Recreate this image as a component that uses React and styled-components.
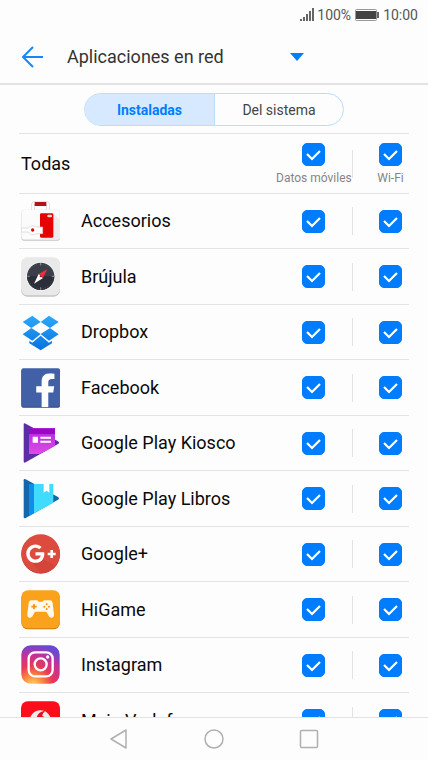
import { useState } from "react";
import styled, { createGlobalStyle } from "styled-components";
import { FaFacebookF, FaGooglePlusG } from "react-icons/fa";

const GlobalStyle = createGlobalStyle`
  * {
    box-sizing: border-box;
  }

  body {
    margin: 0;
    background: #fdfdfd;
    color: #0a0a0a;
    font-family: Roboto, "Noto Sans", sans-serif;
  }

  button, input, select {
    font-family: inherit;
  }
`;

const Screen = styled.div`
  display: flex;
  flex-direction: column;
  height: 100vh;
`;

const StatusBar = styled.div`
  display: flex;
  align-items: center;
  justify-content: flex-end;
  gap: 3px;
  height: 30px;
  padding-right: 10px;
  color: #555;
  font-size: 14px;
  line-height: 16px;
`;

const Header = styled.header`
  display: flex;
  align-items: center;
  gap: 22px;
  height: 55px;
  padding-left: 21px;
  border-bottom: 2px solid #e3e3e3;
`;

const IconButton = styled.button`
  display: grid;
  padding: 0;
  border: 0;
  background: none;
  cursor: pointer;
`;

const Picker = styled.div`
  display: flex;
  align-items: center;

  svg {
    margin-left: -14px;
    pointer-events: none;
  }
`;

const Select = styled.select`
  width: 237px;
  padding: 0;
  border: 0;
  background: none;
  color: #333;
  font-size: 18px;
  line-height: 24px;
  appearance: none;
`;

const Tabs = styled.div`
  display: grid;
  grid-template-columns: 1fr 1fr;
  align-self: center;
  width: 260px;
  height: 33px;
  margin: 8px 0 7px;
  border: 1px solid #bcdcf8;
  border-radius: 17px;
  overflow: hidden;
`;

const Tab = styled.button`
  border: 0;
  padding: 0;
  background: ${({ $active }) => ($active ? "#d7e9fe" : "none")};
  color: ${({ $active }) => ($active ? "#007dff" : "#444")};
  font-size: 14px;
  font-weight: ${({ $active }) => ($active ? 700 : 400)};
  cursor: pointer;

  & + & {
    border-left: 1px solid #bcdcf8;
  }
`;

const List = styled.ul`
  flex: 1;
  min-height: 0;
  margin: 0 19px;
  padding: 0;
  border-top: 1px solid #e3e3e3;
  list-style: none;
  overflow: hidden;
`;

const Row = styled.li`
  display: grid;
  grid-template-columns: 1fr 75px 2px 56px;
  align-items: center;
  height: 55px;
  border-bottom: 1px solid #e3e3e3;

  &:nth-child(odd) {
    height: 56px;
  }

  &:first-child {
    height: 60px;
  }
`;

const AppName = styled.div`
  display: flex;
  align-items: center;
  gap: 20px;
  padding-left: 2px;
  font-size: 18px;
  line-height: 24px;
  white-space: nowrap;
`;

const Separator = styled.span`
  justify-self: end;
  width: 1px;
  height: 28px;
  background: #e3e3e3;
`;

const Cell = styled.label`
  display: grid;
  justify-items: center;
  gap: 5px;
  padding-left: ${({ $last }) => ($last ? 19 : 0)}px;
  color: #858585;
  font-size: 12px;
  line-height: 14px;
  white-space: nowrap;
`;

const Box = styled.span`
  display: grid;

  > * {
    grid-area: 1 / 1;
  }

  svg {
    pointer-events: none;
  }
`;

const Checkbox = styled.input`
  width: 23px;
  height: 23px;
  margin: 0;
  border: 1px solid #b5b5b5;
  border-radius: 5px;
  appearance: none;
  cursor: pointer;

  &:checked {
    border-color: #007dff;
    background: #007dff;
  }
`;

const NavBar = styled.nav`
  display: flex;
  align-items: center;
  justify-content: center;
  gap: 71px;
  height: 43px;
  border-top: 1px solid #e3e3e3;
`;

const AppIcon = ({ children }) => (
  <svg width="40" height="40" viewBox="3 0 120 120" aria-hidden="true">
    {children}
  </svg>
);

const AccessoriesIcon = () => (
  <AppIcon>
    <path d="M39 30V12q0-7 7-7h31q7 0 7 7v18" fill="none" stroke="#cfcfcf" strokeWidth="10" />
    <path d="M39 28V12q0-7 7-7h31q7 0 7 7v16" fill="none" stroke="#fff" strokeWidth="7" />
    <rect x="44" y="3" width="35" height="12" fill="#b3121a" />
    <rect x="4" y="30" width="116" height="89" rx="8" fill="#c4c4c4" />
    <rect x="4" y="26" width="116" height="90" rx="8" fill="#e8e8e8" />
    <rect x="5" y="27" width="114" height="88" rx="8" fill="#fbfbfb" />
    <path d="M100 37l19 19v51q0 8-8 8H66l-6-6z" fill="#ededed" />
    <rect x="60" y="37" width="40" height="73" rx="4" fill="#e60000" />
    <rect x="82" y="41" width="14" height="8" rx="3" fill="#fbd0d0" />
    <path
      d="M4 81h22c4-8 18-8 22-3h20v20H48c-6 6-18 4-22-5H4z"
      fill="#fff"
      stroke="#cfcfcf"
      strokeWidth="2"
    />
    <circle cx="38" cy="87" r="5" fill="#e60000" />
  </AppIcon>
);

const CompassIcon = () => (
  <AppIcon>
    <rect x="3" y="4" width="117" height="115" rx="20" fill="#c4c4c4" />
    <rect x="3" y="1" width="117" height="114" rx="20" fill="#e9e9e9" />
    <circle cx="62" cy="58" r="43" fill="#fafafa" />
    <circle cx="62" cy="58" r="41" fill="#3a3e48" />
    <path d="M21 58a41 41 0 0 0 82 0z" fill="#2b2e38" />
    <circle cx="62" cy="58" r="37" fill="none" stroke="#7b7e87" strokeWidth="3" strokeDasharray="1 6" />
    <path d="M62 18v7M62 91v7M22 58h7M95 58h7" stroke="#c5c5c5" strokeWidth="2" />
    <path d="M82 37L56 51l12 13z" fill="#e8333f" />
    <path d="M42 80l14-29 12 13z" fill="#fff" />
    <circle cx="62" cy="58" r="3" fill="#8b1f29" />
  </AppIcon>
);

const DropboxIcon = () => (
  <AppIcon>
    <defs>
      <linearGradient id="dropbox" x1="0" y1="12" x2="0" y2="114" gradientUnits="userSpaceOnUse">
        <stop offset="0" stopColor="#2aa9fb" />
        <stop offset="1" stopColor="#0a72de" />
      </linearGradient>
    </defs>
    <g fill="url(#dropbox)">
      <path d="M37 11L8 30l26 18 28-18z" />
      <path d="M87 11l29 19-26 18-28-18z" />
      <path d="M34 48L8 67l29 19 25-20z" />
      <path d="M90 48l26 19-29 19-25-20z" />
      <path d="M62 71L37 92l-9-6v8l34 21 34-21v-8l-9 6z" />
    </g>
  </AppIcon>
);

const FacebookIcon = () => (
  <AppIcon>
    <rect x="4" y="4" width="116" height="115" rx="6" fill="#2e4577" />
    <rect x="4" y="1" width="116" height="115" rx="6" fill="#4260a5" />
    <FaFacebookF x="25" y="16" size="102" color="#fff" />
  </AppIcon>
);

const KioskIcon = () => (
  <AppIcon>
    <defs>
      <linearGradient id="kiosk" x1="0" y1="0" x2="0" y2="1">
        <stop offset="0" stopColor="#b22adf" />
        <stop offset="1" stopColor="#e048e8" />
      </linearGradient>
    </defs>
    <path d="M11 5q0-6 6-3l97 53q6 4 0 8l-97 55q-6 3-6-3z" fill="#5e2ca5" />
    <path d="M27 16h78v52L60 93H27z" fill="url(#kiosk)" />
    <path d="M27 16h78v17H27z" fill="#9c06c9" />
    <path d="M38 41h16v18H38zM61 41h32v6H61zM61 53h32v6H61z" fill="#fff" />
  </AppIcon>
);

const BooksIcon = () => (
  <AppIcon>
    <path d="M11 4q0-6 6-3l97 53q6 4 0 8l-97 55q-6 3-6-3z" fill="#1467a8" />
    <path d="M27 15h15v88l-15 8z" fill="#0f8deb" />
    <path d="M42 15h58v56l-58 32z" fill="#3fdcff" />
    <path d="M71 15h17v26l-8-6-9 6z" fill="#fff" />
  </AppIcon>
);

const GooglePlusIcon = () => (
  <AppIcon>
    <circle cx="62" cy="61" r="58" fill="#b83a2e" />
    <circle cx="62" cy="59" r="58" fill="#dd4b3e" />
    <path d="M60 70l46 26a58 58 0 0 1-44 21L31 80z" fill="#d24538" />
    <FaGooglePlusG x="17" y="13" size="92" color="#fff" />
  </AppIcon>
);

const GameIcon = () => (
  <AppIcon>
    <rect x="4" y="4" width="116" height="114" rx="20" fill="#d17c0c" />
    <rect x="4" y="1" width="116" height="114" rx="20" fill="#faa21b" />
    <path
      d="M34 31h16q4 0 6 4h12q2-4 6-4h16q7 0 8 9l4 32c1 14-11 14-16 5l-7-12H45l-7 12c-5 9-17 9-16-5l4-32q1-9 8-9z"
      fill="#fff8ec"
    />
    <path d="M42 42v16M34 50h16" stroke="#ef9414" strokeWidth="5" />
    <g fill="#ef9414">
      <circle cx="80" cy="43" r="3" />
      <circle cx="80" cy="57" r="3" />
      <circle cx="73" cy="50" r="3" />
      <circle cx="87" cy="50" r="3" />
    </g>
  </AppIcon>
);

const InstagramIcon = () => (
  <AppIcon>
    <defs>
      <radialGradient id="insta" cx="0.3" cy="1.05" r="1.05">
        <stop offset="0" stopColor="#fed96f" />
        <stop offset="0.25" stopColor="#fb8b3c" />
        <stop offset="0.5" stopColor="#e93757" />
        <stop offset="0.8" stopColor="#bb32a4" />
        <stop offset="1" stopColor="#6a49cf" />
      </radialGradient>
    </defs>
    <rect x="4" y="1" width="115" height="115" rx="28" fill="url(#insta)" />
    <g fill="none" stroke="#fff" strokeWidth="7">
      <rect x="26" y="22" width="72" height="72" rx="19" />
      <circle cx="62" cy="58" r="18" />
    </g>
    <circle cx="83" cy="36" r="5" fill="#fff" />
  </AppIcon>
);

const VodafoneIcon = () => (
  <AppIcon>
    <rect x="3" y="1" width="117" height="117" rx="20" fill="#fc0d1b" />
    <circle cx="61" cy="60" r="32" fill="#ececec" />
    <path d="M72 30c-14 2-22 12-23 26 0 12 7 20 16 20s15-7 15-15c0-9-6-14-13-16 0-6 2-11 8-13z" fill="#e4101c" />
  </AppIcon>
);

const APPS = [
  { name: "Accesorios", Icon: AccessoriesIcon },
  { name: "Brújula", Icon: CompassIcon },
  { name: "Dropbox", Icon: DropboxIcon },
  { name: "Facebook", Icon: FacebookIcon },
  { name: "Google Play Kiosco", Icon: KioskIcon },
  { name: "Google Play Libros", Icon: BooksIcon },
  { name: "Google+", Icon: GooglePlusIcon },
  { name: "HiGame", Icon: GameIcon },
  { name: "Instagram", Icon: InstagramIcon },
  { name: "Mein Vodafone", Icon: VodafoneIcon }
];

const ALL = APPS.map(app => app.name);

const Check = ({ label, caption, last, checked, onChange }) => (
  <Cell $last={last}>
    <Box>
      <Checkbox
        type="checkbox"
        aria-label={label}
        checked={checked}
        onChange={onChange}
      />
      {checked && (
        <svg width="23" height="23" viewBox="0 0 23 23" aria-hidden="true">
          <path d="M5 11l5 5 8-8" fill="none" stroke="#fff" strokeWidth="2.2" />
        </svg>
      )}
    </Box>
    {caption}
  </Cell>
);

const App = () => {
  const [tab, setTab] = useState("Instaladas");
  const [mobile, setMobile] = useState(ALL);
  const [wifi, setWifi] = useState(ALL);

  const toggle = (list, setList, name) =>
    setList(
      list.includes(name) ? list.filter(item => item !== name) : [...list, name]
    );
  const toggleAll = (list, setList) =>
    setList(list.length === ALL.length ? [] : ALL);

  return (
    <>
      <GlobalStyle />
      <Screen>
        <StatusBar>
          <svg width="14" height="14" viewBox="0 0 14 14" aria-hidden="true">
            <path
              d="M0 11h2v2H0zM3 9h2v4H3zM6 6h2v7H6zM9 3h2v10H9zM12 0h2v13h-2z"
              fill="#666"
            />
          </svg>
          <span>100%</span>
          <svg width="26" height="14" viewBox="0 0 26 14" aria-hidden="true">
            <rect x="1.5" y="1.5" width="21" height="11" rx="1" fill="none" stroke="#999" />
            <rect x="2" y="3" width="20" height="8" fill="#444" />
            <path d="M24 4v6" stroke="#666" strokeWidth="2" />
          </svg>
          <span>10:00</span>
        </StatusBar>

        <Header>
          <IconButton aria-label="Atrás">
            <svg width="24" height="24" viewBox="0 0 24 24">
              <path d="M12 2L2 12l10 10M2 12h20" fill="none" stroke="#1a86f5" strokeWidth="2" />
            </svg>
          </IconButton>
          <Picker>
            <Select aria-label="Sección">
              <option>Aplicaciones en red</option>
            </Select>
            <svg width="14" height="8" viewBox="0 0 14 8" aria-hidden="true">
              <path d="M0 0h14L7 8z" fill="#007dff" />
            </svg>
          </Picker>
        </Header>

        <Tabs role="tablist">
          {["Instaladas", "Del sistema"].map(name => (
            <Tab
              key={name}
              role="tab"
              aria-selected={tab === name}
              $active={tab === name}
              onClick={() => setTab(name)}
            >
              {name}
            </Tab>
          ))}
        </Tabs>

        <List>
          <Row>
            <AppName>Todas</AppName>
            <Check
              caption="Datos móviles"
              checked={mobile.length === ALL.length}
              onChange={() => toggleAll(mobile, setMobile)}
            />
            <Separator />
            <Check
              last
              caption="Wi-Fi"
              checked={wifi.length === ALL.length}
              onChange={() => toggleAll(wifi, setWifi)}
            />
          </Row>
          {APPS.map(({ name, Icon }) => (
            <Row key={name}>
              <AppName>
                <Icon />
                {name}
              </AppName>
              <Check
                label={`${name}: Datos móviles`}
                checked={mobile.includes(name)}
                onChange={() => toggle(mobile, setMobile, name)}
              />
              <Separator />
              <Check
                last
                label={`${name}: Wi-Fi`}
                checked={wifi.includes(name)}
                onChange={() => toggle(wifi, setWifi, name)}
              />
            </Row>
          ))}
        </List>

        <NavBar>
          <IconButton aria-label="Volver">
            <svg width="24" height="24" viewBox="0 0 24 24">
              <path d="M19 3v18L4 12z" fill="none" stroke="#b0b0b0" strokeWidth="1.5" strokeLinejoin="round" />
            </svg>
          </IconButton>
          <IconButton aria-label="Inicio">
            <svg width="24" height="24" viewBox="0 0 24 24">
              <circle cx="12" cy="12" r="9" fill="none" stroke="#b0b0b0" strokeWidth="1.5" />
            </svg>
          </IconButton>
          <IconButton aria-label="Recientes">
            <svg width="24" height="24" viewBox="0 0 24 24">
              <rect x="3.5" y="3.5" width="17" height="17" rx="1" fill="none" stroke="#b0b0b0" strokeWidth="1.5" />
            </svg>
          </IconButton>
        </NavBar>
      </Screen>
    </>
  );
};

export default App;
